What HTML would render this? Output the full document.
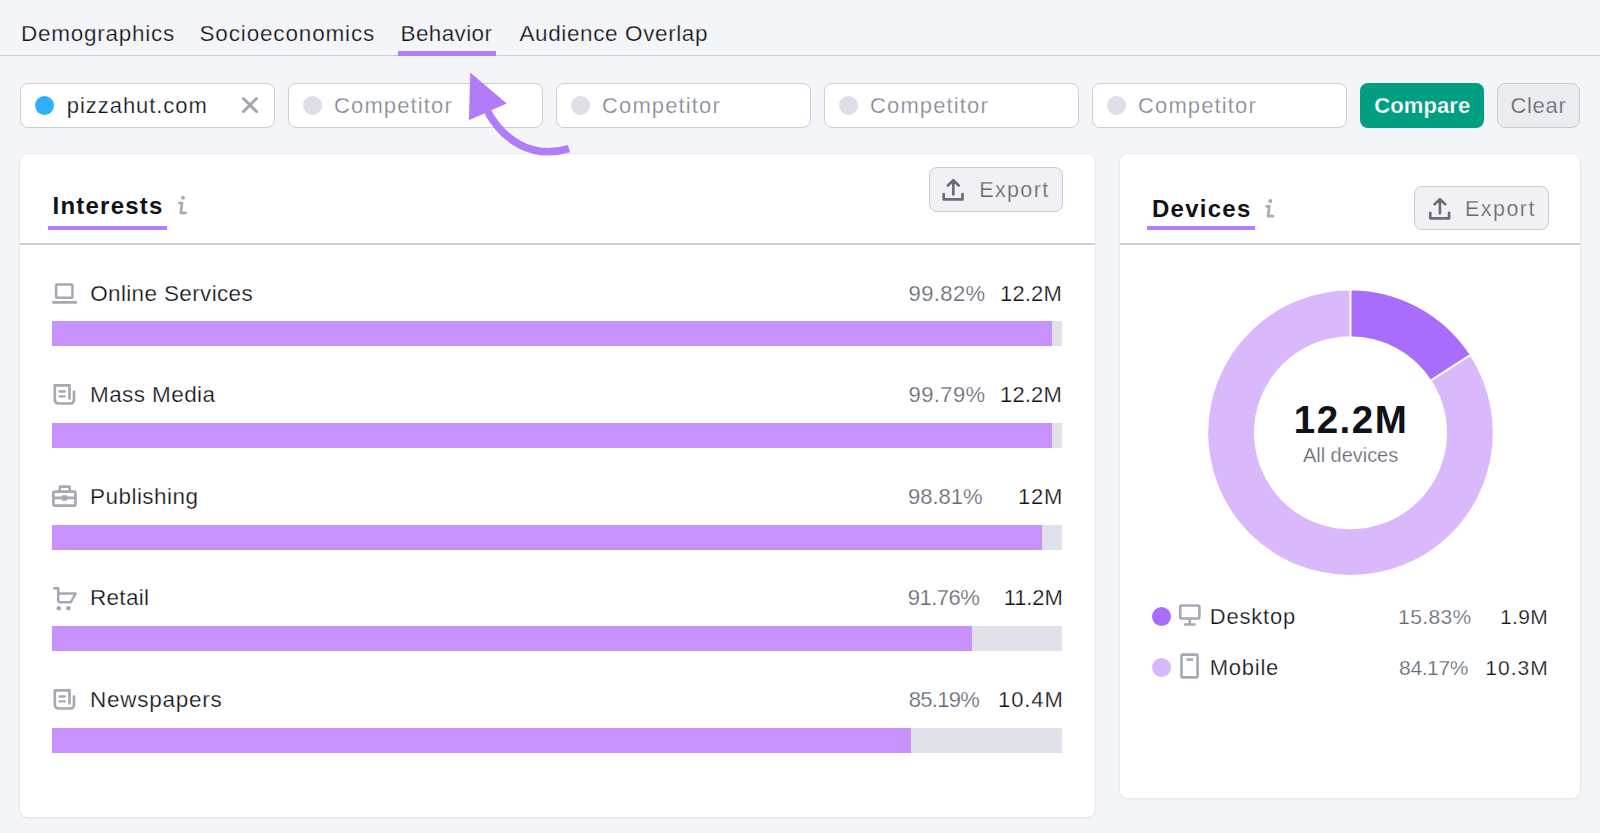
<!DOCTYPE html>
<html><head><meta charset="utf-8">
<style>
html,body{margin:0;padding:0}
body{width:1600px;height:833px;overflow:hidden;background:#f4f5f9;position:relative;font-family:"Liberation Sans",sans-serif}
.t{position:absolute;white-space:nowrap;font-family:"Liberation Sans",sans-serif}
.a{position:absolute}
.box{position:absolute;top:83px;width:253px;height:43px;background:#fff;border:1px solid #cdcfd6;border-radius:8px}
.dot{position:absolute;width:19px;height:19px;border-radius:50%;background:#dedfe6;top:96px}
.card{position:absolute;top:154px;background:#fff;border-radius:8px;box-shadow:0 0 0 1px #e8e9ee,0 1px 2px rgba(25,27,35,.12)}
.btn{position:absolute;background:#f1f1f5;border:1px solid #c9cbd3;border-radius:8px}
.track{position:absolute;left:52px;width:1010px;height:25px;background:#e0e1e9}
.fill{position:absolute;left:0;top:0;height:25px;background:#c792fd}
.div{position:absolute;height:2px;background:#cfd0d6}
.ul{position:absolute;height:4px;background:#b57cfd}
</style></head><body>
<!-- tabs -->
<div class="a" style="left:0;top:55px;width:1600px;height:1px;background:#cdcfd6"></div>
<div class="a" style="left:398px;top:51px;width:98px;height:5px;background:#b57cfd"></div>

<!-- inputs -->
<div class="box" style="left:20px"></div>
<div class="box" style="left:288px"></div>
<div class="box" style="left:556px"></div>
<div class="box" style="left:824px"></div>
<div class="box" style="left:1092px"></div>
<div class="dot" style="left:34.5px;background:#2cb0fb"></div>
<div class="dot" style="left:302.5px"></div>
<div class="dot" style="left:570.5px"></div>
<div class="dot" style="left:838.5px"></div>
<div class="dot" style="left:1106.5px"></div>
<div class="a" style="left:1360px;top:83px;width:124px;height:45px;background:#009f81;border-radius:8px"></div>
<div class="btn" style="left:1497px;top:83px;width:81px;height:43px;background:#ebecf0"></div>

<!-- cards -->
<div class="card" style="left:20px;width:1075px;height:663px"></div>
<div class="card" style="left:1120px;width:460px;height:644px"></div>
<div class="div" style="left:20px;top:243px;width:1075px"></div>
<div class="div" style="left:1120px;top:243px;width:460px"></div>
<div class="ul" style="left:48px;top:226px;width:119px"></div>
<div class="ul" style="left:1147px;top:226px;width:108px"></div>
<div class="btn" style="left:929px;top:167px;width:132px;height:43px"></div>
<div class="btn" style="left:1414px;top:186px;width:133px;height:42px"></div>

<!-- bars -->
<div class="track" style="top:321px"><div class="fill" style="width:1000px"></div></div>
<div class="track" style="top:423px"><div class="fill" style="width:1000px"></div></div>
<div class="track" style="top:525px"><div class="fill" style="width:990px"></div></div>
<div class="track" style="top:626px"><div class="fill" style="width:920px"></div></div>
<div class="track" style="top:728px"><div class="fill" style="width:859px"></div></div>

<!-- legend dots -->
<div class="a" style="left:1151.8px;top:607.4px;width:19px;height:19px;border-radius:50%;background:#a86dfc"></div>
<div class="a" style="left:1151.8px;top:658.2px;width:19px;height:19px;border-radius:50%;background:#d9b7fc"></div>

<svg class="a" style="left:0;top:0" width="1600" height="833" viewBox="0 0 1600 833">
 <g fill="none" stroke-linecap="round" stroke-linejoin="round">
  <!-- X -->
  <path d="M243.5 98.5L256.5 111.5M256.5 98.5L243.5 111.5" stroke="#a3a5b2" stroke-width="3"/>
  <!-- info icons -->
  <g stroke="#a9abb7" stroke-width="2.7">
   <path d="M179.4 203H182L180.8 212.8H185.6"/>
   <path d="M1266.7 206.4H1269.3L1268.1 216.2H1272.9"/>
  </g>
  <!-- export icons -->
  <g stroke="#6b6d7a" stroke-width="2.7">
   <path d="M943.7 194V199.4H962.5V194M953.3 181.5V194.4M947.9 185.5L953.3 180.2L958.7 185.5"/>
   <path d="M1430.3 212.9V218.3H1449.1V212.9M1439.9 200.4V213.3M1434.5 204.4L1439.9 199.1L1445.3 204.4"/>
  </g>
  <!-- row icons -->
  <g stroke="#a6a8b4">
   <rect x="56.15" y="284.55" width="16.3" height="13.1" rx="1" stroke-width="2.5"/>
   <path d="M69.5 398.5V385.4H54.8V399.4Q54.8 403.5 58.9 403.5H70Q74 403.5 74 399.5V391.5" stroke-width="2.7"/>
   <path d="M59.4 391.5H64.8M59.4 396.3H64.8" stroke-width="2.3"/>
   <path d="M69.5 703.5V690.4H54.8V704.4Q54.8 708.5 58.9 708.5H70Q74 708.5 74 704.5V696.5" stroke-width="2.7"/>
   <path d="M59.4 696.5H64.8M59.4 701.3H64.8" stroke-width="2.3"/>
   <rect x="53.35" y="491.55" width="22.1" height="14" rx="1.5" stroke-width="2.7"/>
   <path d="M59.75 491V487.5Q59.75 486.55 60.7 486.55H68.7Q69.65 486.55 69.65 487.5V491" stroke-width="2.7"/>
   <path d="M53.4 497.85H75.4" stroke-width="2.7"/>
   <path d="M54.2 588.3H58.2V600.5Q58.2 602.2 59.9 602.2H70.8L75.7 593.5H58.2" stroke-width="2.5"/>
   <rect x="1180.2" y="605.5" width="19.2" height="13" rx="1.5" stroke-width="2.6"/>
   <path d="M1189.8 619.8V623.5M1185 624.5H1194.5" stroke-width="2.6"/>
   <rect x="1181.5" y="654.6" width="16.1" height="22.8" rx="1.5" stroke-width="2.6"/>
  </g>
 </g>
 <g fill="#a6a8b4">
  <rect x="52" y="301" width="25.1" height="2.7" rx="1"/>
  <rect x="61.6" y="495.2" width="5.6" height="5.5" rx="1"/>
  <circle cx="58.8" cy="608.3" r="2.3"/><circle cx="68.4" cy="608.3" r="2.3"/>
  <rect x="1186.5" y="658.2" width="6.5" height="2.7"/>
 </g>
 <g fill="#a9abb7"><circle cx="183" cy="197.7" r="2"/><circle cx="1270.3" cy="201.1" r="2"/></g>
 <!-- donut -->
 <circle cx="1350.5" cy="432.8" r="119.4" fill="none" stroke="#dab8fc" stroke-width="45.8"/>
 <path d="M1350.5 313.4A119.4 119.4 0 0 1 1450.6 367.8" fill="none" stroke="#a86dfc" stroke-width="45.8"/>
 <path d="M1350.5 290V337M1431.4 380.2L1469.8 355.3" stroke="#fff" stroke-width="2"/>
 <!-- arrow -->
 <path d="M470.2 72.6L468.9 120.2L506.7 103.5Z" fill="#b17cf9"/>
 <path d="M486.5 109.5C502.5 140.5 532.5 159.5 569 148.6" fill="none" stroke="#b17cf9" stroke-width="7.6"/>
</svg>
<div class="t" style="left:20.90px;top:23.00px;font-size:22.5px;line-height:22.5px;font-weight:400;color:#111218;letter-spacing:0.753px;-webkit-text-stroke:0.25px #f4f5f9">Demographics</div>
<div class="t" style="left:199.50px;top:23.00px;font-size:22.5px;line-height:22.5px;font-weight:400;color:#111218;letter-spacing:0.840px;-webkit-text-stroke:0.25px #f4f5f9">Socioeconomics</div>
<div class="t" style="left:400.60px;top:23.00px;font-size:22.5px;line-height:22.5px;font-weight:400;color:#111218;letter-spacing:0.356px;-webkit-text-stroke:0.25px #f4f5f9">Behavior</div>
<div class="t" style="left:519.50px;top:23.00px;font-size:22.5px;line-height:22.5px;font-weight:400;color:#111218;letter-spacing:0.610px;-webkit-text-stroke:0.25px #f4f5f9">Audience Overlap</div>
<div class="t" style="left:66.80px;top:95.00px;font-size:22px;line-height:22px;font-weight:400;color:#111218;letter-spacing:0.946px;-webkit-text-stroke:0.25px #ffffff">pizzahut.com</div>
<div class="t" style="left:334.00px;top:95.00px;font-size:22px;line-height:22px;font-weight:400;color:#858894;letter-spacing:1.126px;-webkit-text-stroke:0.25px #ffffff">Competitor</div>
<div class="t" style="left:602.00px;top:95.00px;font-size:22px;line-height:22px;font-weight:400;color:#858894;letter-spacing:1.126px;-webkit-text-stroke:0.25px #ffffff">Competitor</div>
<div class="t" style="left:870.00px;top:95.00px;font-size:22px;line-height:22px;font-weight:400;color:#858894;letter-spacing:1.126px;-webkit-text-stroke:0.25px #ffffff">Competitor</div>
<div class="t" style="left:1138.00px;top:95.00px;font-size:22px;line-height:22px;font-weight:400;color:#858894;letter-spacing:1.126px;-webkit-text-stroke:0.25px #ffffff">Competitor</div>
<div class="t" style="left:1374.20px;top:95.00px;font-size:22px;line-height:22px;font-weight:700;color:#ffffff;letter-spacing:0.113px;-webkit-text-stroke:0.25px #009f81">Compare</div>
<div class="t" style="left:1510.40px;top:95.00px;font-size:22px;line-height:22px;font-weight:400;color:#656773;letter-spacing:0.688px;-webkit-text-stroke:0.25px #ebecf0">Clear</div>
<div class="t" style="left:52.50px;top:194.00px;font-size:24px;line-height:24px;font-weight:700;color:#111218;letter-spacing:1.226px">Interests</div>
<div class="t" style="left:979.20px;top:180.00px;font-size:21.5px;line-height:21.5px;font-weight:400;color:#656773;letter-spacing:1.367px;-webkit-text-stroke:0.25px #f1f1f5">Export</div>
<div class="t" style="left:1151.90px;top:197.00px;font-size:24px;line-height:24px;font-weight:700;color:#111218;letter-spacing:1.285px">Devices</div>
<div class="t" style="left:1465.00px;top:198.60px;font-size:21.5px;line-height:21.5px;font-weight:400;color:#656773;letter-spacing:1.447px;-webkit-text-stroke:0.25px #f1f1f5">Export</div>
<div class="t" style="left:90.20px;top:283.00px;font-size:22.5px;line-height:22.5px;font-weight:400;color:#111218;letter-spacing:0.356px;-webkit-text-stroke:0.25px #ffffff">Online Services</div>
<div class="t" style="left:90.00px;top:384.00px;font-size:22.5px;line-height:22.5px;font-weight:400;color:#111218;letter-spacing:0.414px;-webkit-text-stroke:0.25px #ffffff">Mass Media</div>
<div class="t" style="left:90.00px;top:486.00px;font-size:22.5px;line-height:22.5px;font-weight:400;color:#111218;letter-spacing:0.466px;-webkit-text-stroke:0.25px #ffffff">Publishing</div>
<div class="t" style="left:90.00px;top:587.00px;font-size:22.5px;line-height:22.5px;font-weight:400;color:#111218;letter-spacing:0.295px;-webkit-text-stroke:0.25px #ffffff">Retail</div>
<div class="t" style="left:90.00px;top:689.00px;font-size:22.5px;line-height:22.5px;font-weight:400;color:#111218;letter-spacing:0.744px;-webkit-text-stroke:0.25px #ffffff">Newspapers</div>
<div class="t" style="left:908.60px;top:283.00px;font-size:22px;line-height:22px;font-weight:400;color:#656773;letter-spacing:0.369px;-webkit-text-stroke:0.25px #ffffff">99.82%</div>
<div class="t" style="left:1000.00px;top:283.00px;font-size:22px;line-height:22px;font-weight:400;color:#111218;letter-spacing:0.170px;-webkit-text-stroke:0.25px #ffffff">12.2M</div>
<div class="t" style="left:908.60px;top:384.00px;font-size:22px;line-height:22px;font-weight:400;color:#656773;letter-spacing:0.369px;-webkit-text-stroke:0.25px #ffffff">99.79%</div>
<div class="t" style="left:1000.00px;top:384.00px;font-size:22px;line-height:22px;font-weight:400;color:#111218;letter-spacing:0.170px;-webkit-text-stroke:0.25px #ffffff">12.2M</div>
<div class="t" style="left:908.00px;top:486.00px;font-size:22px;line-height:22px;font-weight:400;color:#656773;letter-spacing:-0.011px;-webkit-text-stroke:0.25px #ffffff">98.81%</div>
<div class="t" style="left:1018.00px;top:486.00px;font-size:22px;line-height:22px;font-weight:400;color:#111218;letter-spacing:0.765px;-webkit-text-stroke:0.25px #ffffff">12M</div>
<div class="t" style="left:907.70px;top:587.00px;font-size:22px;line-height:22px;font-weight:400;color:#656773;letter-spacing:-0.491px;-webkit-text-stroke:0.25px #ffffff">91.76%</div>
<div class="t" style="left:1003.70px;top:587.00px;font-size:22px;line-height:22px;font-weight:400;color:#111218;letter-spacing:-0.096px;-webkit-text-stroke:0.25px #ffffff">11.2M</div>
<div class="t" style="left:908.70px;top:689.00px;font-size:22px;line-height:22px;font-weight:400;color:#656773;letter-spacing:-0.691px;-webkit-text-stroke:0.25px #ffffff">85.19%</div>
<div class="t" style="left:998.00px;top:689.00px;font-size:22px;line-height:22px;font-weight:400;color:#111218;letter-spacing:0.920px;-webkit-text-stroke:0.25px #ffffff">10.4M</div>
<div class="t" style="left:1293.80px;top:401.00px;font-size:38.5px;line-height:38.5px;font-weight:700;color:#111218;letter-spacing:1.492px">12.2M</div>
<div class="t" style="left:1303.00px;top:445.00px;font-size:20px;line-height:20px;font-weight:400;color:#656773;letter-spacing:-0.040px;-webkit-text-stroke:0.25px #ffffff">All devices</div>
<div class="t" style="left:1209.80px;top:606.00px;font-size:22px;line-height:22px;font-weight:400;color:#111218;letter-spacing:0.788px;-webkit-text-stroke:0.25px #ffffff">Desktop</div>
<div class="t" style="left:1209.80px;top:657.00px;font-size:22px;line-height:22px;font-weight:400;color:#111218;letter-spacing:0.726px;-webkit-text-stroke:0.25px #ffffff">Mobile</div>
<div class="t" style="left:1398.10px;top:606.00px;font-size:21px;line-height:21px;font-weight:400;color:#656773;letter-spacing:0.390px;-webkit-text-stroke:0.25px #ffffff">15.83%</div>
<div class="t" style="left:1500.00px;top:606.00px;font-size:21px;line-height:21px;font-weight:400;color:#111218;letter-spacing:0.369px;-webkit-text-stroke:0.25px #ffffff">1.9M</div>
<div class="t" style="left:1399.10px;top:657.00px;font-size:21px;line-height:21px;font-weight:400;color:#656773;letter-spacing:-0.390px;-webkit-text-stroke:0.25px #ffffff">84.17%</div>
<div class="t" style="left:1485.30px;top:657.00px;font-size:21px;line-height:21px;font-weight:400;color:#111218;letter-spacing:1.032px;-webkit-text-stroke:0.25px #ffffff">10.3M</div>
</body></html>
